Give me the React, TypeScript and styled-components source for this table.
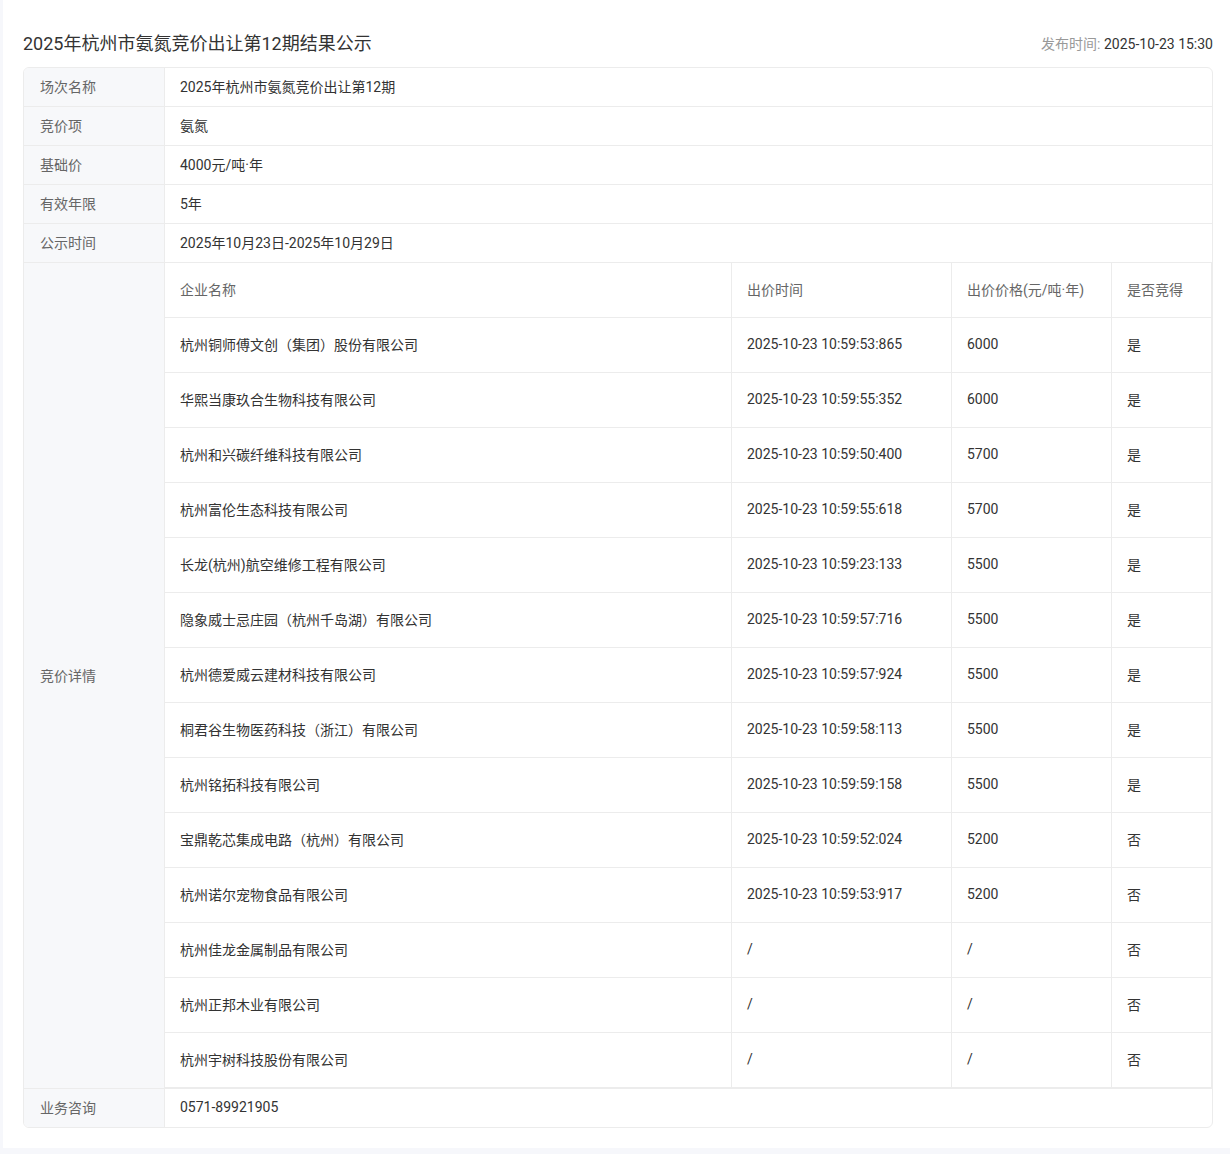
import React from "react";
import styled, { createGlobalStyle } from "styled-components";

const GlobalStyle = createGlobalStyle`
  html, body {
    margin: 0;
    padding: 0;
    background: #f6f7fb;
  }
  body {
    font-family: Roboto, "Noto Sans CJK SC", sans-serif;
    font-size: 14px;
    color: #333;
  }
`;

const Page = styled.div`
  padding: 0 0 7px 3px;
`;

const Card = styled.div`
  background: #fff;
  padding: 31px 17px 20px 20px;
  display: flex;
  flex-direction: column;
  gap: 10px;
`;

const Header = styled.div`
  display: flex;
  align-items: center;
  justify-content: space-between;
`;

const Title = styled.h1`
  margin: 0;
  font-size: 18px;
  line-height: 26px;
  font-weight: 400;
  color: #333;
`;

const Meta = styled.div`
  font-size: 14px;
  line-height: 26px;
  color: #333;
`;

const MetaLabel = styled.span`
  color: #999;
`;

const Table = styled.div`
  border: 1px solid #ececec;
  border-radius: 6px;
  overflow: hidden;
  display: grid;
  grid-template-columns: 141px 1fr;
`;

const Label = styled.div<{ $last?: boolean }>`
  background: #f7f8fa;
  color: #666;
  padding: 0 0 2px 16px;
  min-height: 36px;
  display: flex;
  align-items: center;
  border-right: 1px solid #ececec;
  border-bottom: ${(p) => (p.$last ? "none" : "1px solid #ececec")};
`;

const Value = styled.div<{ $last?: boolean; $nested?: boolean }>`
  color: #333;
  padding: ${(p) => (p.$nested ? "0" : "0 0 2px 15px")};
  min-height: 36px;
  display: flex;
  align-items: center;
  border-bottom: ${(p) => (p.$last ? "none" : "1px solid #ececec")};
`;

const Nested = styled.div`
  width: 100%;
  display: grid;
  grid-template-columns: 567px 220px 160px 1fr;
`;

const Cell = styled.div<{ $head?: boolean }>`
  height: 52px;
  display: flex;
  align-items: center;
  padding: 0 0 2px 15px;
  color: ${(p) => (p.$head ? "#666" : "#333")};
  border-right: 1px solid #ececec;
  border-bottom: 1px solid #ececec;
`;

const bids: [string, string, string, string][] = [
  ["杭州铜师傅文创（集团）股份有限公司", "2025-10-23 10:59:53:865", "6000", "是"],
  ["华熙当康玖合生物科技有限公司", "2025-10-23 10:59:55:352", "6000", "是"],
  ["杭州和兴碳纤维科技有限公司", "2025-10-23 10:59:50:400", "5700", "是"],
  ["杭州富伦生态科技有限公司", "2025-10-23 10:59:55:618", "5700", "是"],
  ["长龙(杭州)航空维修工程有限公司", "2025-10-23 10:59:23:133", "5500", "是"],
  ["隐象威士忌庄园（杭州千岛湖）有限公司", "2025-10-23 10:59:57:716", "5500", "是"],
  ["杭州德爱威云建材科技有限公司", "2025-10-23 10:59:57:924", "5500", "是"],
  ["桐君谷生物医药科技（浙江）有限公司", "2025-10-23 10:59:58:113", "5500", "是"],
  ["杭州铭拓科技有限公司", "2025-10-23 10:59:59:158", "5500", "是"],
  ["宝鼎乾芯集成电路（杭州）有限公司", "2025-10-23 10:59:52:024", "5200", "否"],
  ["杭州诺尔宠物食品有限公司", "2025-10-23 10:59:53:917", "5200", "否"],
  ["杭州佳龙金属制品有限公司", "/", "/", "否"],
  ["杭州正邦木业有限公司", "/", "/", "否"],
  ["杭州宇树科技股份有限公司", "/", "/", "否"],
];

const info: [string, string][] = [
  ["场次名称", "2025年杭州市氨氮竞价出让第12期"],
  ["竞价项", "氨氮"],
  ["基础价", "4000元/吨·年"],
  ["有效年限", "5年"],
  ["公示时间", "2025年10月23日-2025年10月29日"],
];

export default function App() {
  return (
    <>
      <GlobalStyle />
      <Page>
        <Card>
          <Header>
            <Title>2025年杭州市氨氮竞价出让第12期结果公示</Title>
            <Meta>
              <MetaLabel>发布时间: </MetaLabel>2025-10-23 15:30
            </Meta>
          </Header>
          <Table>
            {info.map(([k, v]) => (
              <React.Fragment key={k}>
                <Label>{k}</Label>
                <Value>{v}</Value>
              </React.Fragment>
            ))}
            <Label>竞价详情</Label>
            <Value $nested>
              <Nested>
                <Cell $head>企业名称</Cell>
                <Cell $head>出价时间</Cell>
                <Cell $head>出价价格(元/吨·年)</Cell>
                <Cell $head>是否竞得</Cell>
                {bids.map((r) => (
                  <React.Fragment key={r[0]}>
                    <Cell>{r[0]}</Cell>
                    <Cell>{r[1]}</Cell>
                    <Cell>{r[2]}</Cell>
                    <Cell>{r[3]}</Cell>
                  </React.Fragment>
                ))}
              </Nested>
            </Value>
            <Label $last>业务咨询</Label>
            <Value $last>0571-89921905</Value>
          </Table>
        </Card>
      </Page>
    </>
  );
}
